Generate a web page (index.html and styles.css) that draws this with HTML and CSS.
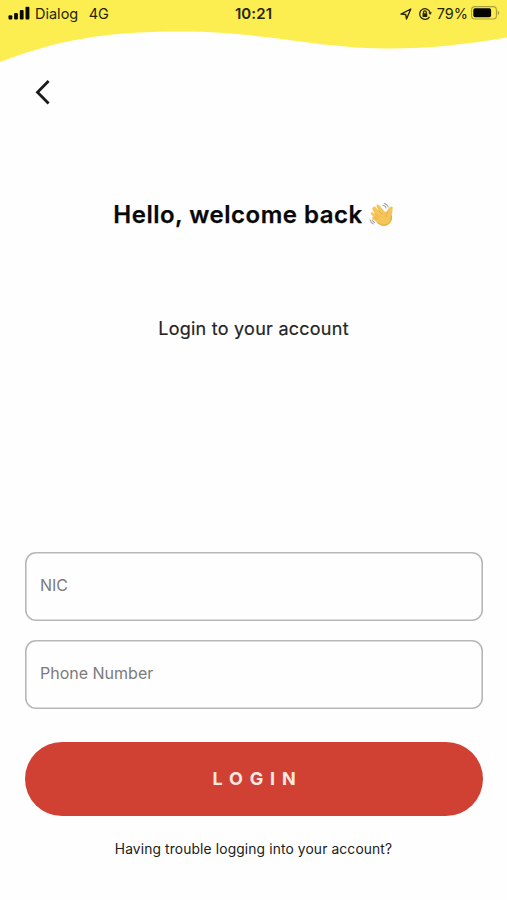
FILE: index.html
```html
<!DOCTYPE html>
<html lang="en">
<head>
<meta charset="utf-8">
<meta name="viewport" content="width=device-width, initial-scale=1">
<title>Login</title>
<link rel="stylesheet" href="styles.css">
</head>
<body>
<div class="screen">
  <header class="top">
    <svg class="wave" viewBox="0 0 507 66" aria-hidden="true">
      <path fill="#fcee50" d="M0 0H507V37.500C462 45 424 49 385 48.500C306 47 264 31.500 180 31.500C103 31.500 55 41 0 62Z"/>
    </svg>
    <div class="status">
      <div class="status-left">
        <svg class="signal" viewBox="0 0 22 14" aria-hidden="true">
          <rect x="0.500" y="9.200" width="3.800" height="4.300" rx="1"/>
          <rect x="6.100" y="7" width="3.800" height="6.500" rx="1"/>
          <rect x="11.800" y="4" width="3.800" height="9.500" rx="1"/>
          <rect x="17.500" y="0.800" width="3.900" height="12.700" rx="1"/>
        </svg>
        <span class="carrier">Dialog</span>
        <span class="network">4G</span>
      </div>
      <span class="clock">10:21</span>
      <div class="status-right">
        <svg class="locate" viewBox="0 0 12 12" aria-hidden="true">
          <path d="M1 6.100L10.800 1L6.500 11L5.700 6.500Z"/>
        </svg>
        <svg class="rotation" viewBox="0 0 14 14" aria-hidden="true">
          <path class="ring" d="M11.500 9.800A5.300 5.300 0 1 1 12 5.300"/>
          <path d="M10.300 5.300H14L12.200 8Z"/>
          <rect x="4.500" y="6.200" width="4.800" height="3.700" rx=".6"/>
          <path class="shackle" d="M5.500 6.500V5.300A1.400 1.400 0 0 1 8.300 5.300V6.500"/>
        </svg>
        <span class="percent">79%</span>
        <svg class="battery" viewBox="0 0 29 14" aria-hidden="true">
          <rect class="case" x=".6" y=".6" width="24.800" height="12.400" rx="3.300"/>
          <rect x="2.300" y="2.300" width="17.800" height="9" rx="1.800"/>
          <path class="cap" d="M26.700 4.500Q30 6.800 26.700 9.200Z"/>
        </svg>
      </div>
    </div>
  </header>
  <button class="back" aria-label="Back">
    <svg viewBox="0 0 16 26" aria-hidden="true"><path d="M13.600 2L2.500 13.200L13.600 24.400"/></svg>
  </button>
  <h1 class="title"><span>Hello, welcome back</span>
    <svg class="wave-hand" viewBox="0 0 26 26" aria-hidden="true">
      <path fill="#f6c557" d="M4.300 5.100C5.300 4 6.200 4.600 7.100 5.700L9.800 8.900L7.600 4.500C6.900 2.800 8.800 1.700 10 3.100L15.700 9.600C16.700 10.500 17.700 10 18.100 8.600L20.500 5.300C21.600 3.700 24.200 4.500 23.700 6.300L22.900 13.100C23.700 18 21.900 21.700 17.900 23.200C14 24.600 11.200 23.300 8.900 21.300L3.700 17C2.200 15.600 3.500 14.200 5 15L2.200 12.500C.8 11 2.300 9.500 3.800 10.600L6.200 12.400L3.700 8.300C2.900 7 3.200 5.700 4.300 5.100Z"/>
      <path class="creases" d="M9.700 8.700L13.300 12.300M6.200 11.900L10 15.200M4.800 14.700L8.300 17.400M18.600 9.500Q16.600 12.100 17.100 14.600"/>
      <path class="shade" d="M8.600 21Q13 24.700 17.700 22.800Q22.900 20.600 22.500 14"/>
      <path class="motion" d="M15.300 1.400Q18.200 2.200 19.300 4.900M14 3.300Q16.300 3.900 17 6M1 17.900Q1.700 20.800 4.400 21.900M3.200 17.900Q3.800 19.600 5.500 20.400"/>
    </svg>
  </h1>
  <p class="subtitle">Login to your account</p>
  <form class="form">
    <input class="field" type="text" placeholder="NIC" aria-label="NIC">
    <input class="field" type="tel" placeholder="Phone Number" aria-label="Phone Number">
    <button class="login" type="button">LOGIN</button>
  </form>
  <a class="help">Having trouble logging into your account?</a>
</div>
</body>
</html>
```
FILE: styles.css
```css
* { box-sizing: border-box; }
body { margin: 0; background: #fefefe; font-family: Inter, "Liberation Sans", sans-serif; color: #111; }
.screen { height: 900px; display: flex; flex-direction: column; overflow: hidden; }
.top { display: grid; height: 66px; flex: none; }
.wave, .status { grid-area: 1 / 1; }
.wave { width: 100%; height: 66px; display: block; }
.status { display: grid; grid-template-columns: 1fr auto 1fr; align-items: center; height: 27px; padding: 0 8px; font-size: 14.500px; line-height: 18px; color: #282508; }
.status-left, .status-right { display: flex; align-items: center; }
.status-right { justify-content: flex-end; margin-right: -1px; }
.signal { width: 22px; height: 14px; margin: -1px 5px 0 0; fill: #090900; }
.network { margin-left: 10.500px; font-size: 14.500px; }
.clock { font-size: 15px; font-weight: 600; letter-spacing: .1px; }
.locate { width: 12px; height: 12px; margin-right: 6px; fill: none; stroke: #282508; stroke-width: 1.400; stroke-linejoin: round; }
.rotation { width: 14px; height: 14px; margin-right: 5px; fill: #282508; }
.ring, .shackle { fill: none; stroke: #282508; stroke-width: 1.300; }
.percent { margin-right: 3px; }
.battery { width: 29px; height: 14px; margin-top: -1px; fill: #050500; }
.case { fill: none; stroke: #aaa03b; stroke-width: 1.100; }
.cap { fill: #aaa03b; }
.back { width: 16px; height: 26px; margin: 13px 0 0 35px; padding: 0; border: 0; background: none; flex: none; }
.back svg { display: block; width: 16px; height: 26px; fill: none; stroke: #1b1b1d; stroke-width: 2.800; }
.title { display: flex; justify-content: center; align-items: center; gap: 6px; height: 32px; margin: 94px 0 0; padding-left: 1px; font-size: 24px; line-height: 32px; font-weight: 600; color: #080808; letter-spacing: .5px; -webkit-text-stroke: .25px #080808; }
.wave-hand { width: 26px; height: 26px; }
.creases, .shade, .motion { fill: none; stroke-linecap: round; }
.creases { stroke: #dfa447; stroke-width: .7; }
.shade { stroke: #e5a83d; stroke-width: 1; }
.motion { stroke: #a5a5a5; stroke-width: 1.100; }
.subtitle { margin: 86px 0 0; text-align: center; font-size: 18px; line-height: 24px; letter-spacing: .25px; color: #252525; -webkit-text-stroke: .2px #252525; }
.form { display: flex; flex-direction: column; margin: 211px 24px 0 25px; }
.field { width: 100%; height: 69px; margin: 0 0 19px; padding: 0 15px 4px; border: 0; box-shadow: inset 0 0 0 1.600px #b7b7b7; border-radius: 11px; background: transparent; font: 16px/20px Inter, "Liberation Sans", sans-serif; outline: 0; }
.field::placeholder { color: #7b7b7b; opacity: 1; }
.login { height: 74px; margin-top: 14px; padding: 0 0 0 7px; border: 0; border-radius: 37px; background: #d04134; color: #fbe8e4; font: 700 18px/24px Inter, "Liberation Sans", sans-serif; letter-spacing: 6.800px; }
.help { margin-top: 24px; text-align: center; font-size: 13.800px; line-height: 18px; letter-spacing: .13px; color: #202020; }
```
